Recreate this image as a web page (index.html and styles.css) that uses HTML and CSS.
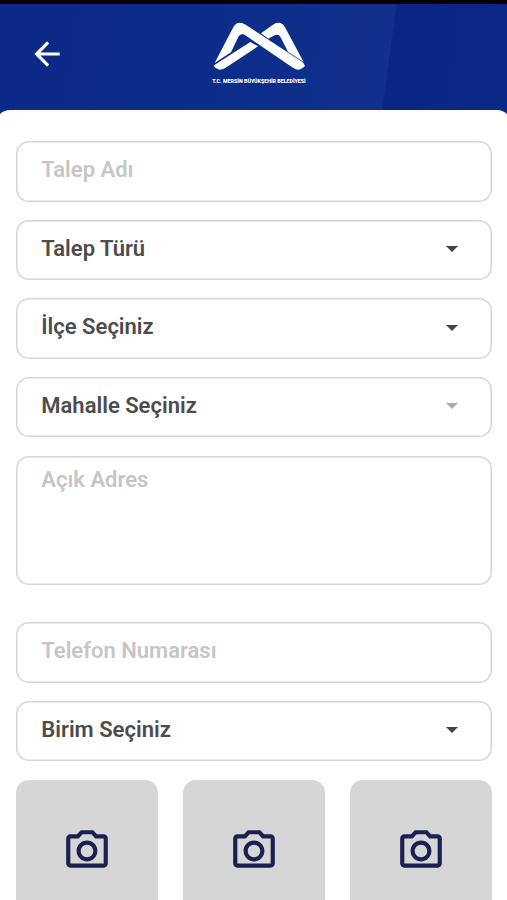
FILE: index.html
```
<!DOCTYPE html>
<html lang="tr">
<head>
<meta charset="utf-8">
<title>Talep</title>
<link rel="stylesheet" href="styles.css">
</head>
<body>
<svg class="defs" aria-hidden="true">
  <symbol id="camera" viewBox="0 0 24 24"><path d="M14.12 4l1.83 2H20v12H4V6h4.05l1.83-2h4.24M15 2H9L7.17 4H4c-1.1 0-2 .9-2 2v12c0 1.1.9 2 2 2h16c1.1 0 2-.9 2-2V6c0-1.1-.9-2-2-2h-3.17L15 2zm-3 7c1.65 0 3 1.35 3 3s-1.35 3-3 3-3-1.35-3-3 1.35-3 3-3m0-2c-2.76 0-5 2.24-5 5s2.24 5 5 5 5-2.24 5-5-2.24-5-5-5z"/></symbol>
  <symbol id="caret" viewBox="0 0 12 6"><path d="M0 0h12L6 6z"/></symbol>
</svg>
<header class="header">
  <svg class="back" viewBox="0 0 24 24"><path d="M20 11H7.83l5.59-5.59L12 4l-8 8 8 8 1.41-1.41L7.83 13H20v-2z"/></svg>
  <div class="brand">
    <svg class="logo" viewBox="636 62 284 150">
      <path d="M644 188L699 82Q707 67 719 67Q728 67 737 73L906 184Q912 188 915 197Q905 208 893 208Q886 207 880 203L738 106Q731 101 725 102Q719 103 716 108L693 156Z"/>
      <path d="M641 197Q641 195 648 191L751 125L774 138L677 202Q667 208 658 208Q648 206 641 197Z"/>
      <path d="M783 99L818 74Q826 67 836 67Q848 67 855 81L911 185L864 154L841 109Q837 102 830 103Q825 103 805 115Z"/>
    </svg>
    <div class="brand-name">T.C. MERSİN BÜYÜKŞEHİR BELEDİYESİ</div>
  </div>
</header>
<main class="sheet">
  <div class="field hint">Talep Adı</div>
  <div class="field">Talep Türü<svg class="caret"><use href="#caret"/></svg></div>
  <div class="field">İlçe Seçiniz<svg class="caret"><use href="#caret"/></svg></div>
  <div class="field">Mahalle Seçiniz<svg class="caret off"><use href="#caret"/></svg></div>
  <div class="field area hint">Açık Adres</div>
  <div class="field hint">Telefon Numarası</div>
  <div class="field">Birim Seçiniz<svg class="caret"><use href="#caret"/></svg></div>
  <div class="photos">
    <div class="photo"><svg><use href="#camera"/></svg></div>
    <div class="photo"><svg><use href="#camera"/></svg></div>
    <div class="photo"><svg><use href="#camera"/></svg></div>
  </div>
</main>
</body>
</html>
```
FILE: styles.css
```
* { box-sizing: border-box; }
html { height: 100%; overflow: hidden; }
body {
  margin: 0;
  height: 900px;
  overflow: hidden;
  background: linear-gradient(98deg, #0b2a88 0, #0b2b89 150px, #10308c 393px, #092685 394px, #0b2987 100%) 0 0 / 100% 130px no-repeat #fff;
  font-family: Roboto, "Liberation Sans", sans-serif;
}
.defs { display: none; }
.header {
  height: 110px;
  border-top: 4px solid #000;
  display: grid;
  grid-template-columns: 93px 1fr 82px;
  align-items: start;
}
.back { width: 38px; height: 38px; margin: 31px 0 0 27.5px; fill: #fff; }
.brand {
  display: flex;
  flex-direction: column;
  align-items: center;
  padding-top: 16.7px;
  color: #fff;
}
.logo { width: 94.67px; height: 50px; fill: #fff; }
.brand-name {
  margin-top: 7.8px;
  font-size: 5.3px;
  line-height: 7px;
  font-weight: 900;
  white-space: nowrap;
}
.sheet {
  margin: 0 -4px;
  height: 790px;
  padding: 31.4px 19px 0 20.3px;
  border-radius: 14px 14px 0 0;
  background: #fff;
}
.field {
  display: flex;
  justify-content: space-between;
  height: 60.5px;
  margin-bottom: 18px;
  padding: 15px 34px 0 25px;
  border-radius: 13px;
  box-shadow: inset 0 0 0 1.5px #d6d6d6;
  color: #4c4c4c;
  font-size: 22px;
  line-height: 28px;
  font-weight: 600;
}
.hint { color: #c6c6c6; }
.area { height: 129.6px; padding-top: 10.7px; margin: 18.4px 0 37px; }
.caret { width: 12px; height: 6px; margin-top: 11.5px; fill: #444; }
.off { fill: #adadad; }
.photos { display: flex; justify-content: space-between; padding-top: .2px; }
.photo {
  display: flex;
  align-items: center;
  justify-content: center;
  width: 142px;
  height: 142px;
  border-radius: 13px;
  background: #d6d6d6;
}
.photo svg { width: 50px; height: 50px; fill: #18214f; }
```
